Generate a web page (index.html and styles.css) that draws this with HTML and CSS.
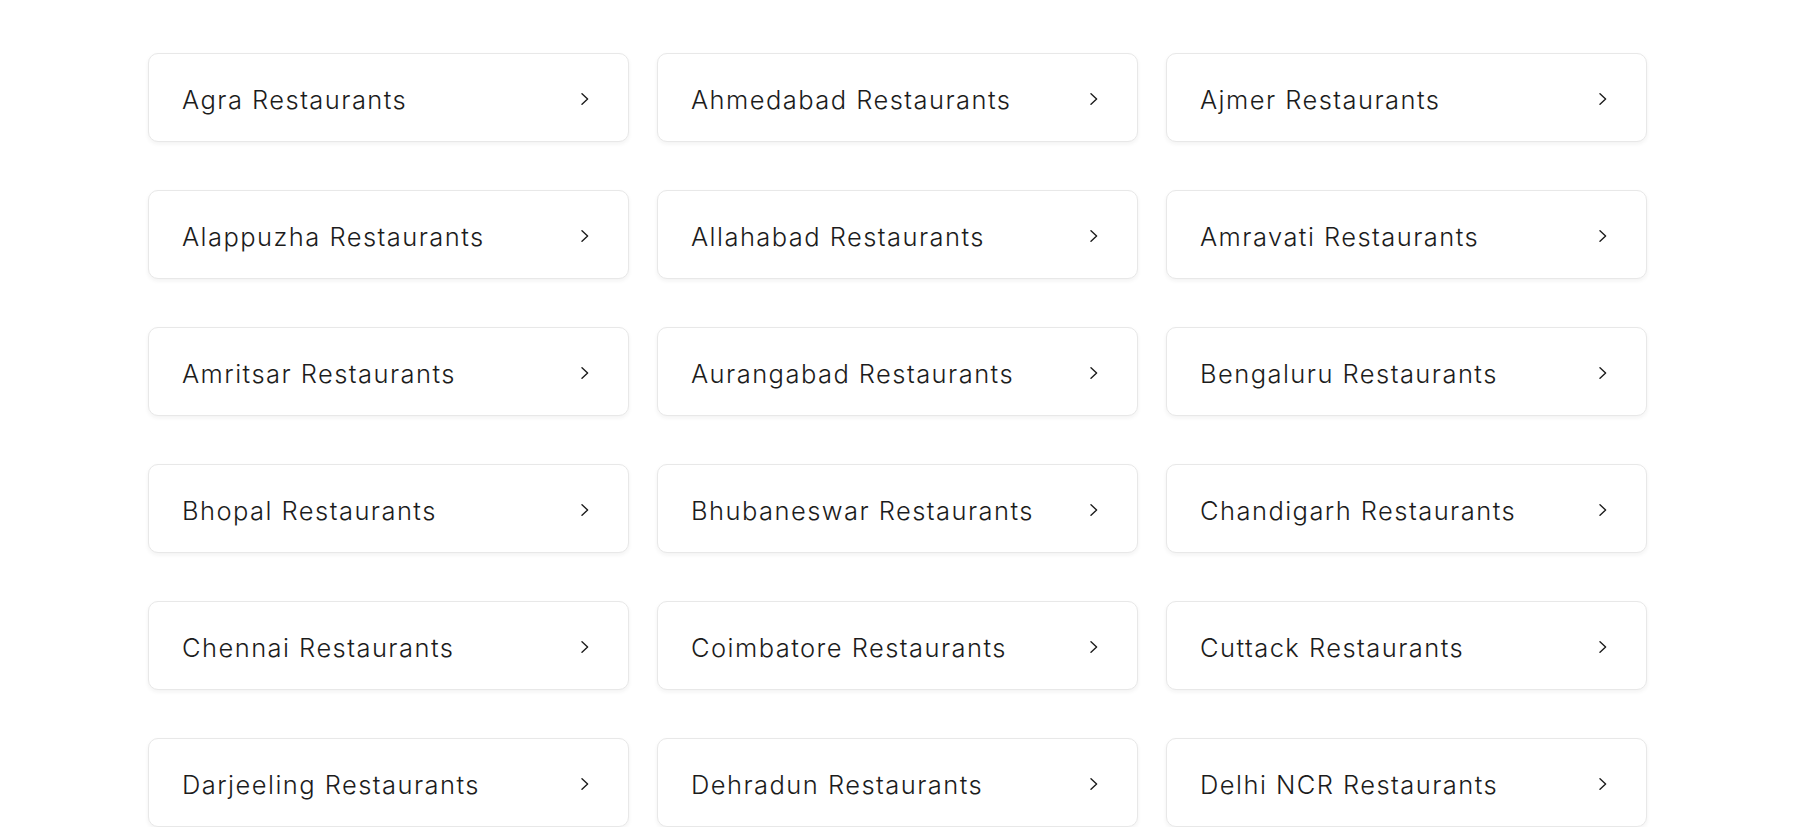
FILE: index.html
```html
<!DOCTYPE html>
<html lang="en">
<head>
<meta charset="utf-8">
<title>Restaurants by city</title>
<link rel="stylesheet" href="styles.css">
</head>
<body>
<main class="page">
  <div class="grid">
    <a class="card" href="#"><span class="name">Agra Restaurants</span><svg class="chev" viewBox="0 0 8 12"><path d="M1 0.8 L6.6 6 L1 11.2"/></svg></a>
    <a class="card" href="#"><span class="name">Ahmedabad Restaurants</span><svg class="chev" viewBox="0 0 8 12"><path d="M1 0.8 L6.6 6 L1 11.2"/></svg></a>
    <a class="card" href="#"><span class="name">Ajmer Restaurants</span><svg class="chev" viewBox="0 0 8 12"><path d="M1 0.8 L6.6 6 L1 11.2"/></svg></a>
    <a class="card" href="#"><span class="name">Alappuzha Restaurants</span><svg class="chev" viewBox="0 0 8 12"><path d="M1 0.8 L6.6 6 L1 11.2"/></svg></a>
    <a class="card" href="#"><span class="name">Allahabad Restaurants</span><svg class="chev" viewBox="0 0 8 12"><path d="M1 0.8 L6.6 6 L1 11.2"/></svg></a>
    <a class="card" href="#"><span class="name">Amravati Restaurants</span><svg class="chev" viewBox="0 0 8 12"><path d="M1 0.8 L6.6 6 L1 11.2"/></svg></a>
    <a class="card" href="#"><span class="name">Amritsar Restaurants</span><svg class="chev" viewBox="0 0 8 12"><path d="M1 0.8 L6.6 6 L1 11.2"/></svg></a>
    <a class="card" href="#"><span class="name">Aurangabad Restaurants</span><svg class="chev" viewBox="0 0 8 12"><path d="M1 0.8 L6.6 6 L1 11.2"/></svg></a>
    <a class="card" href="#"><span class="name">Bengaluru Restaurants</span><svg class="chev" viewBox="0 0 8 12"><path d="M1 0.8 L6.6 6 L1 11.2"/></svg></a>
    <a class="card" href="#"><span class="name">Bhopal Restaurants</span><svg class="chev" viewBox="0 0 8 12"><path d="M1 0.8 L6.6 6 L1 11.2"/></svg></a>
    <a class="card" href="#"><span class="name">Bhubaneswar Restaurants</span><svg class="chev" viewBox="0 0 8 12"><path d="M1 0.8 L6.6 6 L1 11.2"/></svg></a>
    <a class="card" href="#"><span class="name">Chandigarh Restaurants</span><svg class="chev" viewBox="0 0 8 12"><path d="M1 0.8 L6.6 6 L1 11.2"/></svg></a>
    <a class="card" href="#"><span class="name">Chennai Restaurants</span><svg class="chev" viewBox="0 0 8 12"><path d="M1 0.8 L6.6 6 L1 11.2"/></svg></a>
    <a class="card" href="#"><span class="name">Coimbatore Restaurants</span><svg class="chev" viewBox="0 0 8 12"><path d="M1 0.8 L6.6 6 L1 11.2"/></svg></a>
    <a class="card" href="#"><span class="name">Cuttack Restaurants</span><svg class="chev" viewBox="0 0 8 12"><path d="M1 0.8 L6.6 6 L1 11.2"/></svg></a>
    <a class="card" href="#"><span class="name">Darjeeling Restaurants</span><svg class="chev" viewBox="0 0 8 12"><path d="M1 0.8 L6.6 6 L1 11.2"/></svg></a>
    <a class="card" href="#"><span class="name">Dehradun Restaurants</span><svg class="chev" viewBox="0 0 8 12"><path d="M1 0.8 L6.6 6 L1 11.2"/></svg></a>
    <a class="card" href="#"><span class="name">Delhi NCR Restaurants</span><svg class="chev" viewBox="0 0 8 12"><path d="M1 0.8 L6.6 6 L1 11.2"/></svg></a>
  </div>
</main>
</body>
</html>
```

FILE: styles.css
```css
html, body {
  margin: 0;
  padding: 0;
  background: #ffffff;
}

body {
  font-family: Inter, "Noto Sans", sans-serif;
  color: #1c1c1c;
  overflow: hidden;
}

.page {
  padding: 53px 0 0 148px;
}

.grid {
  display: grid;
  grid-template-columns: repeat(3, 481px);
  column-gap: 28px;
  row-gap: 48px;
}

.card {
  box-sizing: border-box;
  height: 89px;
  display: flex;
  align-items: center;
  justify-content: space-between;
  padding: 0 39px 0 33px;
  border: 1px solid #e8e8e8;
  border-radius: 10px;
  background: #fff;
  box-shadow: 0 2px 4px rgba(28, 28, 28, 0.06);
  text-decoration: none;
  color: #1c1c1c;
}

.name {
  font-size: 25.5px;
  font-weight: 320;
  letter-spacing: 1.45px;
  line-height: 30px;
  padding-top: 4px;
}

.chev {
  width: 8px;
  height: 12px;
  margin-top: 2px;
  fill: none;
  stroke: #1c1c1c;
  stroke-width: 1.4;
  stroke-linecap: round;
  stroke-linejoin: round;
}
```
